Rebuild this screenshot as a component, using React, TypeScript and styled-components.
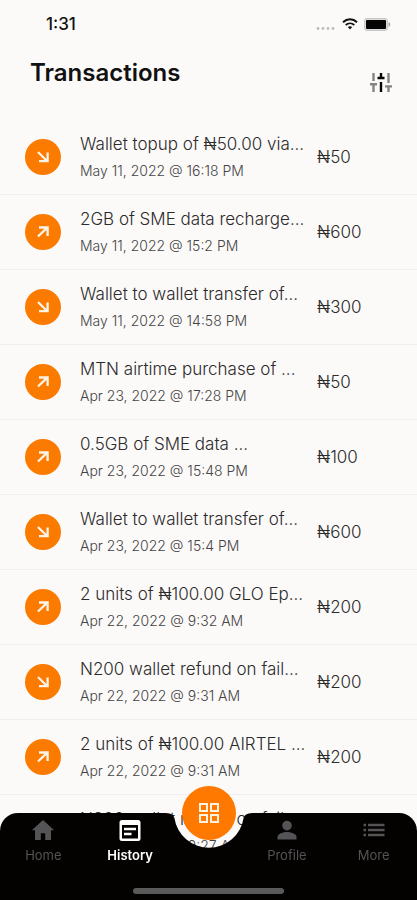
import React from "react";
import styled, { createGlobalStyle } from "styled-components";

const colors = {
  page: "#fcfaf9",
  ink: "#111111",
  text: "#2b2b2b",
  muted: "#444444",
  line: "#f0efee",
  accent: "#fb7a00",
  bar: "#030201",
  idle: "#545456",
};

const GlobalStyle = createGlobalStyle`
  * { box-sizing: border-box; }
  body {
    margin: 0;
    background: ${colors.page};
    color: ${colors.text};
    font-family: Inter, "Noto Sans", sans-serif;
  }
`;

const Screen = styled.div`
  min-height: 100vh;
  overflow: hidden;
`;

const StatusBar = styled.div`
  display: flex;
  align-items: center;
  justify-content: space-between;
  height: 48px;
  padding: 0 26px 0 46px;
`;

const Clock = styled.span`
  font-size: 17px;
  line-height: 20px;
  font-weight: 500;
  color: ${colors.ink};
`;

const StatusIcons = styled.div`
  display: flex;
  align-items: center;
  gap: 6px;
  svg { display: block; }
`;

const Header = styled.header`
  display: flex;
  justify-content: space-between;
  height: 72px;
  padding: 10px 24px 0 30px;
`;

const Title = styled.h1`
  margin: 0;
  font-size: 24px;
  line-height: 30px;
  font-weight: 600;
  color: ${colors.ink};
`;

const FilterButton = styled.button`
  display: block;
  height: 24px;
  margin-top: 12px;
  padding: 0;
  border: 0;
  background: none;
  cursor: pointer;
  svg { display: block; }
`;

const List = styled.ul`
  margin: 0;
  padding: 0;
  list-style: none;
`;

const Row = styled.li`
  display: grid;
  grid-template-columns: 36px minmax(0, 1fr) 76px;
  align-items: center;
  height: 75px;
  padding: 0 24px 0 25px;
  border-bottom: 1px solid ${colors.line};
`;

const Direction = styled.span`
  display: grid;
  place-items: center;
  width: 36px;
  height: 36px;
  border-radius: 50%;
  background: ${colors.accent};
`;

const Details = styled.div`
  padding-left: 19px;
  white-space: nowrap;
`;

const Description = styled.div`
  font-size: 17px;
  line-height: 28px;
  font-weight: 300;
`;

const DateText = styled.div`
  font-size: 14px;
  line-height: 26px;
  font-weight: 300;
  color: ${colors.muted};
`;

const Amount = styled.span`
  font-size: 17px;
  line-height: 26px;
  font-weight: 300;
`;

const BottomBar = styled.nav`
  position: fixed;
  left: 0;
  right: 0;
  bottom: 0;
`;

const BarBackdrop = styled.div`
  display: grid;
  grid-template-columns: 1fr 100px 1fr;
  height: 87px;
  svg { display: block; }
`;

const BarSide = styled.div<{ $side: "left" | "right" }>`
  background: ${colors.bar};
  border-radius: ${(p) => (p.$side === "left" ? "18px 0 0 0" : "0 18px 0 0")};
`;

const BarContent = styled.div`
  position: absolute;
  inset: 0;
  display: flex;
  flex-direction: column;
  align-items: center;
  justify-content: space-between;
  padding-bottom: 6px;
`;

const Tabs = styled.div`
  display: grid;
  grid-template-columns: 1fr 1fr 70px 1fr 1fr;
  width: 100%;
`;

const Tab = styled.a<{ $active?: boolean }>`
  display: flex;
  flex-direction: column;
  align-items: center;
  padding-top: 5px;
  gap: 4px;
  color: ${(p) => (p.$active ? "#ffffff" : colors.idle)};
  font-size: 13px;
  line-height: 18px;
  font-weight: ${(p) => (p.$active ? 600 : 400)};
  text-decoration: none;
  svg { display: block; }
`;

const MenuButton = styled.button`
  display: grid;
  place-items: center;
  justify-self: center;
  width: 54px;
  height: 54px;
  margin-top: -27px;
  margin-bottom: -27px;
  padding: 0;
  border: 0;
  border-radius: 50%;
  background: #ff7800;
  cursor: pointer;
`;

const HomeIndicator = styled.div`
  width: 36%;
  height: 6px;
  border-radius: 3px;
  background: #5b5a5a;
`;

const ArrowIcon = ({ incoming }: { incoming: boolean }) => (
  <svg width="16" height="16" viewBox="0 0 16 16" fill="none" stroke="#fff3e6" strokeWidth="2.3" aria-hidden="true">
    {incoming ? <path d="M3 3L12 12M12.6 3.5V12.2H4" /> : <path d="M3 12.5L12 3.8M4 3.5H12.6V12" />}
  </svg>
);

const WifiIcon = () => (
  <svg width="16" height="12" viewBox="0 0 16 12" fill="none" stroke="#111" aria-hidden="true">
    <path d="M1 4.2C5 .4 11 .4 15 4.2" strokeWidth="2" />
    <path d="M3.7 7C6.2 4.7 9.8 4.7 12.3 7" strokeWidth="1.8" />
    <path d="M5.8 9.1C7.1 7.9 8.9 7.9 10.2 9.1L8 11.5Z" fill="#111" stroke="none" />
  </svg>
);

const BatteryIcon = () => (
  <svg width="27" height="13" viewBox="0 0 27 13" aria-hidden="true">
    <rect x=".5" y=".5" width="23" height="12" rx="2.5" fill="#dddcdb" stroke="#c9c8c7" />
    <rect x="2" y="2" width="20" height="9" rx="1" fill="#050505" />
    <path d="M24.5 4V9C27 8 27 5 24.5 4Z" fill="#aaa" />
  </svg>
);

const CellIcon = () => (
  <svg width="20" height="12" viewBox="0 0 20 12" fill="#bdbcbb" aria-hidden="true">
    <circle cx="2" cy="10.5" r="1.4" />
    <circle cx="7" cy="10.5" r="1.4" />
    <circle cx="12" cy="10.5" r="1.4" />
    <circle cx="17" cy="10.5" r="1.4" />
  </svg>
);

const SlidersIcon = () => (
  <svg width="24" height="24" viewBox="0 0 24 24" fill="none" aria-hidden="true">
    <g stroke="#858483" strokeWidth="2.4">
      <path d="M4.5 3V11M4.5 14V22M1 14.2H8M19.5 3V13M19.5 16V22M16 16.4H23" />
    </g>
    <path d="M12 3V8M12 12V22M8.5 8H15.5" stroke="#050505" strokeWidth="2.4" />
  </svg>
);

const GridIcon = () => (
  <svg width="20" height="20" viewBox="0 0 20 20" fill="none" stroke="#fff3df" strokeWidth="2" aria-hidden="true">
    <rect x="1" y="1" width="7" height="7" />
    <rect x="12" y="1" width="7" height="7" />
    <rect x="1" y="12" width="7" height="7" />
    <rect x="12" y="12" width="7" height="7" />
  </svg>
);

const HomeIcon = () => (
  <svg width="26" height="24" viewBox="0 0 26 24" fill="currentColor" aria-hidden="true">
    <path d="M13 2L1.8 12.3H5V22H10.8V15.2H15.2V22H21V12.3H24.2Z" />
  </svg>
);

const HistoryIcon = () => (
  <svg width="24" height="24" viewBox="0 0 24 24" fill="none" aria-hidden="true">
    <rect x="1.5" y="2" width="21" height="21" rx="2.5" fill="currentColor" />
    <path d="M4 7H20V20.5H4Z" fill={colors.bar} />
    <path d="M6 11H18M6 16H13.5" stroke="currentColor" strokeWidth="2.4" />
  </svg>
);

const ProfileIcon = () => (
  <svg width="24" height="24" viewBox="0 0 24 24" fill="currentColor" aria-hidden="true">
    <circle cx="12" cy="7.6" r="4.8" />
    <path d="M2.5 21.5V19C2.5 15.5 8.5 14 12 14S21.5 15.5 21.5 19V21.5Z" />
  </svg>
);

const MoreIcon = () => (
  <svg width="24" height="24" viewBox="0 0 24 24" fill="none" stroke="currentColor" strokeWidth="2.3" aria-hidden="true">
    <path d="M1.5 7H4M6 7H22.5M1.5 12H4M6 12H22.5M1.5 17H4M6 17H22.5" />
  </svg>
);

const BarNotch = () => (
  <svg width="100" height="87" viewBox="0 0 100 87" fill={colors.bar} aria-hidden="true">
    <path d="M0 0H5C10 0 14.500 1 15.400 5A35 35 0 0 0 84.600 5C85.500 1 90 0 95 0H100V87H0Z" />
  </svg>
);

type Transaction = { text: string; date: string; amount: string; incoming: boolean };

const transactions: Transaction[] = [
  { text: "Wallet topup of ₦50.00 via...", date: "May 11, 2022 @ 16:18 PM", amount: "₦50", incoming: true },
  { text: "2GB of SME data recharge...", date: "May 11, 2022 @ 15:2 PM", amount: "₦600", incoming: false },
  { text: "Wallet to wallet transfer of...", date: "May 11, 2022 @ 14:58 PM", amount: "₦300", incoming: true },
  { text: "MTN airtime purchase of ...", date: "Apr 23, 2022 @ 17:28 PM", amount: "₦50", incoming: false },
  { text: "0.5GB of SME data ...", date: "Apr 23, 2022 @ 15:48 PM", amount: "₦100", incoming: false },
  { text: "Wallet to wallet transfer of...", date: "Apr 23, 2022 @ 15:4 PM", amount: "₦600", incoming: true },
  { text: "2 units of ₦100.00 GLO Ep...", date: "Apr 22, 2022 @ 9:32 AM", amount: "₦200", incoming: false },
  { text: "N200 wallet refund on fail...", date: "Apr 22, 2022 @ 9:31 AM", amount: "₦200", incoming: true },
  { text: "2 units of ₦100.00 AIRTEL ...", date: "Apr 22, 2022 @ 9:31 AM", amount: "₦200", incoming: false },
  { text: "N200 wallet refund on fail...", date: "Apr 22, 2022 @ 9:27 AM", amount: "₦200", incoming: true },
];

export default function App() {
  return (
    <>
      <GlobalStyle />
      <Screen>
        <StatusBar>
          <Clock>1:31</Clock>
          <StatusIcons>
            <CellIcon />
            <WifiIcon />
            <BatteryIcon />
          </StatusIcons>
        </StatusBar>
        <Header>
          <Title>Transactions</Title>
          <FilterButton type="button" aria-label="Filter transactions">
            <SlidersIcon />
          </FilterButton>
        </Header>
        <List>
          {transactions.map((t) => (
            <Row key={t.text + t.date}>
              <Direction>
                <ArrowIcon incoming={t.incoming} />
              </Direction>
              <Details>
                <Description>{t.text}</Description>
                <DateText>{t.date}</DateText>
              </Details>
              <Amount>{t.amount}</Amount>
            </Row>
          ))}
        </List>
      </Screen>
      <BottomBar>
        <BarBackdrop>
          <BarSide $side="left" />
          <BarNotch />
          <BarSide $side="right" />
        </BarBackdrop>
        <BarContent>
          <Tabs>
            <Tab href="#home">
              <HomeIcon />
              Home
            </Tab>
            <Tab href="#history" $active aria-current="page">
              <HistoryIcon />
              History
            </Tab>
            <MenuButton type="button" aria-label="Open menu">
              <GridIcon />
            </MenuButton>
            <Tab href="#profile">
              <ProfileIcon />
              Profile
            </Tab>
            <Tab href="#more">
              <MoreIcon />
              More
            </Tab>
          </Tabs>
          <HomeIndicator />
        </BarContent>
      </BottomBar>
    </>
  );
}
